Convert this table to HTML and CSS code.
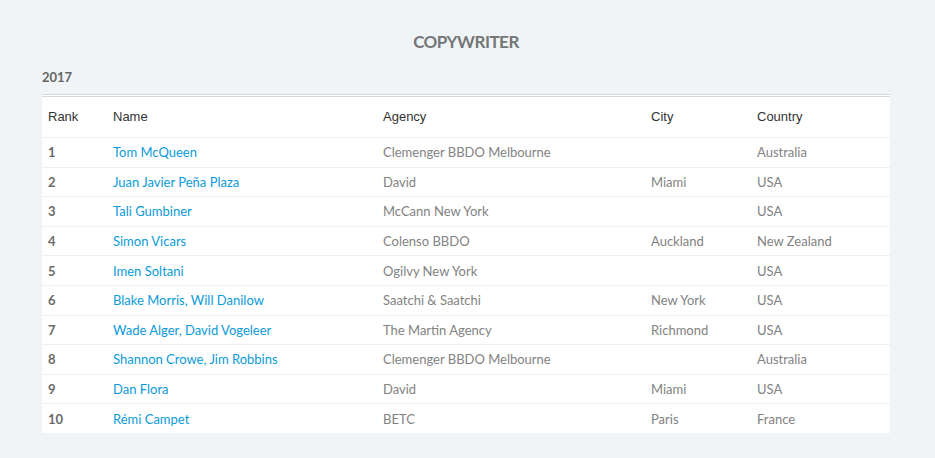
FILE: index.html
```html
<!DOCTYPE html>
<html>
<head>
<meta charset="utf-8">
<link rel="stylesheet" href="styles.css">
</head>
<body>
<div class="page">
  <h1 class="title">COPYWRITER</h1>
  <h2 class="year">2017</h2>
  <table class="ranking">
    <thead>
      <tr><th class="c-rank">Rank</th><th class="c-name">Name</th><th class="c-agency">Agency</th><th class="c-city">City</th><th class="c-country">Country</th></tr>
    </thead>
    <tbody>
      <tr><td class="rank">1</td><td><a href="#">Tom McQueen</a></td><td>Clemenger BBDO Melbourne</td><td></td><td>Australia</td></tr>
      <tr><td class="rank">2</td><td><a href="#">Juan Javier Peña Plaza</a></td><td>David</td><td>Miami</td><td>USA</td></tr>
      <tr><td class="rank">3</td><td><a href="#">Tali Gumbiner</a></td><td>McCann New York</td><td></td><td>USA</td></tr>
      <tr><td class="rank">4</td><td><a href="#">Simon Vicars</a></td><td>Colenso BBDO</td><td>Auckland</td><td>New Zealand</td></tr>
      <tr><td class="rank">5</td><td><a href="#">Imen Soltani</a></td><td>Ogilvy New York</td><td></td><td>USA</td></tr>
      <tr><td class="rank">6</td><td><a href="#">Blake Morris, Will Danilow</a></td><td>Saatchi &amp; Saatchi</td><td>New York</td><td>USA</td></tr>
      <tr><td class="rank">7</td><td><a href="#">Wade Alger, David Vogeleer</a></td><td>The Martin Agency</td><td>Richmond</td><td>USA</td></tr>
      <tr><td class="rank">8</td><td><a href="#">Shannon Crowe, Jim Robbins</a></td><td>Clemenger BBDO Melbourne</td><td></td><td>Australia</td></tr>
      <tr><td class="rank">9</td><td><a href="#">Dan Flora</a></td><td>David</td><td>Miami</td><td>USA</td></tr>
      <tr><td class="rank">10</td><td><a href="#">Rémi Campet</a></td><td>BETC</td><td>Paris</td><td>France</td></tr>
    </tbody>
  </table>
</div>
</body>
</html>
```
FILE: styles.css
```css
html, body {
  margin: 0;
  padding: 0;
  background: #f0f4f7;
}
body {
  font-family: "Lato", "Liberation Sans", sans-serif;
  color: #777;
}
.page {
  padding: 31px 45px 0 42px;
}
.title {
  margin: 0;
  text-align: center;
  font-size: 17px;
  font-weight: 700;
  color: #747678;
  letter-spacing: -0.5px;
  line-height: 22px;
}
.year {
  margin: 15px 0 0;
  font-size: 13px;
  font-weight: 700;
  color: #666;
  line-height: 18px;
}
.ranking {
  margin-top: 8px;
  width: 848px;
  border-collapse: collapse;
  background: #fff;
  border-top: 3px double #d6d9dc;
  font-size: 13px;
}
.ranking th {
  font-family: "Liberation Sans", Arial, sans-serif;
  font-weight: 400;
  color: #333;
  text-align: left;
  height: 42px;
  padding: 0 6px 2px;
  border-bottom: 1px solid #eef0f2;
  box-sizing: border-box;
}
.ranking td {
  height: 29.6px;
  padding: 0 6px;
  border-bottom: 1px solid #eef0f2;
  box-sizing: border-box;
  color: #828282;
}
.ranking tbody tr:last-child td {
  border-bottom: none;
}
.ranking td.rank {
  font-weight: 700;
  color: #6a6a6a;
}
.c-rank { width: 65px; }
.c-name { width: 270px; }
.c-agency { width: 268px; }
.c-city { width: 106px; }
.ranking a {
  color: #0b9ad9;
  text-decoration: none;
}
```
